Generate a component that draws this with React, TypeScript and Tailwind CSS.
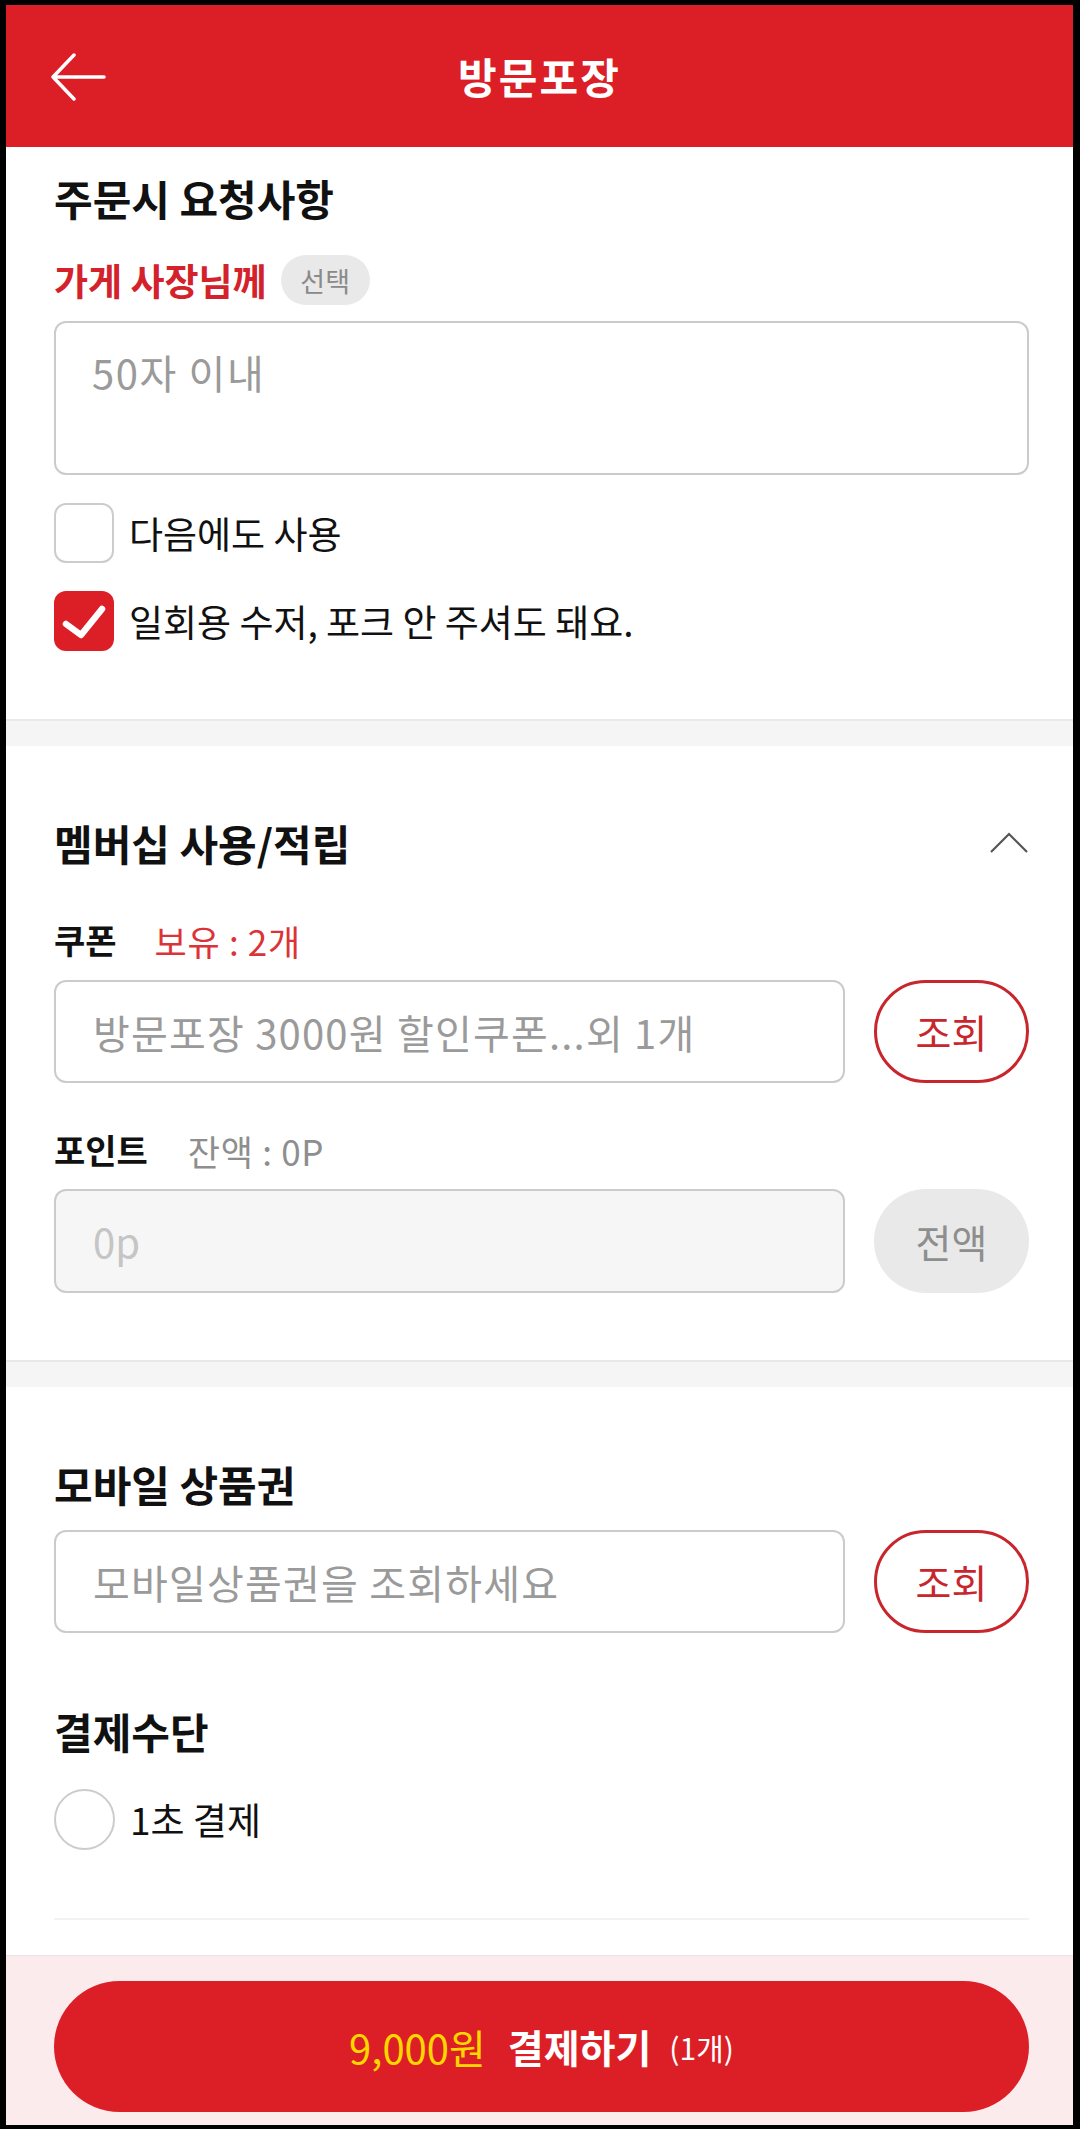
import { useState } from 'react';

const font = "font-['Noto_Sans_CJK_KR','Noto_Sans',sans-serif]";

function BackArrow() {
  return (
    <svg width="56" height="48" viewBox="0 0 56 48" fill="none">
      <path
        d="M3 24 H54 M24 2 L3 24 L24 46"
        stroke="white"
        strokeWidth="3.5"
        strokeLinecap="round"
        strokeLinejoin="round"
      />
    </svg>
  );
}

function ChevronUp() {
  return (
    <svg width="40" height="24" viewBox="0 0 40 24" fill="none">
      <path d="M2 21 L20 3 L38 21" stroke="#555" strokeWidth="2.2" />
    </svg>
  );
}

function CheckMark() {
  return (
    <svg width="60" height="60" viewBox="0 0 60 60" fill="none">
      <path d="M12 33 L27 44 L48 18" stroke="white" strokeWidth="6.5" strokeLinecap="round" strokeLinejoin="round" />
    </svg>
  );
}

function SectionGap() {
  return <div className="h-[25px] bg-[#f5f5f5] border-t-2 border-[#e9e9e9] box-content" />;
}

function OutlineButton({ label }: { label: string }) {
  return (
    <button className="w-[155px] h-full shrink-0 rounded-full border-[3px] border-[#c8262d] text-[#c8262d] text-[39px] leading-none">
      {label}
    </button>
  );
}

export default function App() {
  const [reuse, setReuse] = useState(false);
  const [noCutlery, setNoCutlery] = useState(true);

  return (
    <div className={`bg-black pt-[5px] pl-[6px] pr-[7px] pb-[6px] min-h-[2129px] ${font}`}>
      <div className="bg-white flex flex-col">
        {/* Header */}
        <header className="relative h-[142px] bg-[#dc1f26] flex items-center justify-center">
          <div className="absolute left-[44px] top-[48px]">
            <BackArrow />
          </div>
          <h1 className="text-white text-[42px] font-bold leading-none tracking-[0.05em]">방문포장</h1>
        </header>

        {/* 주문시 요청사항 */}
        <section className="pt-[30px] pb-[68px] pl-[48px] pr-[44px] flex flex-col">
          <h2 className="text-[42px] font-bold leading-none text-[#111]">주문시 요청사항</h2>
          <div className="mt-[36px] h-[50px] flex items-center gap-[14px]">
            <span className="text-[37px] font-bold leading-none text-[#d3222b]">가게 사장님께</span>
            <span className="w-[89px] h-[50px] rounded-full bg-[#e9e9e9] flex items-center justify-center text-[27px] text-[#8a8a8a] leading-none">
              선택
            </span>
          </div>
          <textarea
            placeholder="50자 이내"
            className="mt-[16px] h-[154px] w-full resize-none rounded-[12px] border-2 border-[#cbcbcb] pl-[36px] pt-[29px] text-[40px] leading-none tracking-[0.04em] outline-none placeholder:text-[#9a9a9a]"
          />
          <label className="mt-[28px] h-[60px] flex items-center gap-[15px] cursor-pointer" onClick={() => setReuse(!reuse)}>
            <span
              className={`w-[60px] h-[60px] rounded-[12px] flex items-center justify-center ${
                reuse ? 'bg-[#dc1f26]' : 'border-2 border-[#cccccc]'
              }`}
            >
              {reuse && <CheckMark />}
            </span>
            <span className="text-[37px] leading-none text-[#111]">다음에도 사용</span>
          </label>
          <label className="mt-[28px] h-[60px] flex items-center gap-[15px] cursor-pointer" onClick={() => setNoCutlery(!noCutlery)}>
            <span
              className={`w-[60px] h-[60px] rounded-[12px] flex items-center justify-center ${
                noCutlery ? 'bg-[#dc1f26]' : 'border-2 border-[#cccccc]'
              }`}
            >
              {noCutlery && <CheckMark />}
            </span>
            <span className="text-[37px] leading-none text-[#111]">일회용 수저, 포크 안 주셔도 돼요.</span>
          </label>
        </section>

        <SectionGap />

        {/* 멤버십 사용/적립 */}
        <section className="pt-[76px] pb-[67px] pl-[48px] pr-[44px] flex flex-col">
          <div className="h-[42px] flex items-center justify-between">
            <h2 className="text-[42px] font-bold leading-none text-[#111]">멤버십 사용/적립</h2>
            <ChevronUp />
          </div>
          <div className="mt-[59px] h-[34px] flex items-center gap-[38px]">
            <span className="text-[34px] font-bold leading-none text-[#111]">쿠폰</span>
            <span className="text-[35px] leading-none tracking-[0.02em] text-[#db3338]">보유 : 2개</span>
          </div>
          <div className="mt-[23px] h-[103px] flex gap-[29px]">
            <input
              readOnly
              placeholder="방문포장 3000원 할인쿠폰...외 1개"
              className="flex-1 min-w-0 h-full rounded-[12px] border-2 border-[#cbcbcb] pl-[37px] text-[40px] tracking-[0.03em] outline-none placeholder:text-[#9a9a9a]"
            />
            <OutlineButton label="조회" />
          </div>
          <div className="mt-[50px] h-[34px] flex items-center gap-[40px]">
            <span className="text-[34px] font-bold leading-none text-[#111]">포인트</span>
            <span className="text-[35px] leading-none tracking-[0.02em] text-[#8e8e8e]">잔액 : 0P</span>
          </div>
          <div className="mt-[22px] h-[104px] flex gap-[29px]">
            <input
              disabled
              placeholder="0p"
              className="flex-1 min-w-0 h-full rounded-[12px] border-2 border-[#cbcbcb] bg-[#f6f6f6] pl-[37px] text-[40px] outline-none placeholder:text-[#c5c5c5]"
            />
            <button className="w-[155px] h-full shrink-0 rounded-full bg-[#e9e9e9] text-[#8e8e8e] text-[39px] leading-none">
              전액
            </button>
          </div>
        </section>

        <SectionGap />

        {/* 모바일 상품권 / 결제수단 */}
        <section className="pt-[76px] pb-[35px] pl-[48px] pr-[44px] flex flex-col">
          <h2 className="text-[42px] font-bold leading-none text-[#111]">모바일 상품권</h2>
          <div className="mt-[25px] h-[103px] flex gap-[29px]">
            <input
              readOnly
              placeholder="모바일상품권을 조회하세요"
              className="flex-1 min-w-0 h-full rounded-[12px] border-2 border-[#cbcbcb] pl-[37px] text-[40px] tracking-[0.03em] outline-none placeholder:text-[#9a9a9a]"
            />
            <OutlineButton label="조회" />
          </div>
          <h2 className="mt-[77px] text-[42px] font-bold leading-none text-[#111]">결제수단</h2>
          <label className="mt-[37px] h-[61px] flex items-center gap-[15px]">
            <span className="w-[61px] h-[61px] rounded-full border-2 border-[#cccccc]" />
            <span className="text-[37px] leading-none text-[#111]">1초 결제</span>
          </label>
          <div className="mt-[68px] h-[2px] bg-[#f3f3f3]" />
        </section>

        {/* Bottom pay bar */}
        <div className="border-t border-[#e5e5e5] bg-[#fcebec] pt-[25px] pb-[13px] pl-[48px] pr-[44px]">
          <button className="w-full h-[131px] rounded-full bg-[#dc1f26] flex items-center justify-center">
            <span className="text-[40px] leading-none text-[#ffd600]">9,000원</span>
            <span className="ml-[22px] text-[39px] font-bold leading-none text-white">결제하기</span>
            <span className="ml-[18px] text-[30px] leading-none text-white">(1개)</span>
          </button>
        </div>
      </div>
    </div>
  );
}
